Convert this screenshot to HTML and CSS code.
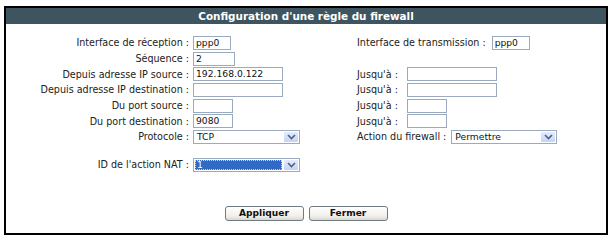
FILE: index.html
```html
<!DOCTYPE html>
<html>
<head>
<meta charset="utf-8">
<link rel="stylesheet" href="styles.css">
</head>
<body>
<div class="frame">
  <div class="title">Configuration d'une règle du firewall</div>
  <div class="grid">
    <div class="lbl">Interface de réception :</div>
    <div class="cell"><span class="inp w38">ppp0</span></div>
    <div class="cell rc">Interface de transmission :<span class="inp w38 ml6">ppp0</span></div>

    <div class="lbl">Séquence :</div>
    <div class="cell"><span class="inp w42">2</span></div>
    <div class="cell rc"></div>

    <div class="lbl">Depuis adresse IP source :</div>
    <div class="cell"><span class="inp w90">192.168.0.122</span></div>
    <div class="cell rc">Jusqu'à :<span class="inp w90 ml9">&nbsp;</span></div>

    <div class="lbl">Depuis adresse IP destination :</div>
    <div class="cell"><span class="inp w90">&nbsp;</span></div>
    <div class="cell rc">Jusqu'à :<span class="inp w90 ml9">&nbsp;</span></div>

    <div class="lbl">Du port source :</div>
    <div class="cell"><span class="inp w40">&nbsp;</span></div>
    <div class="cell rc">Jusqu'à :<span class="inp w40 ml9">&nbsp;</span></div>

    <div class="lbl">Du port destination :</div>
    <div class="cell"><span class="inp w40">9080</span></div>
    <div class="cell rc">Jusqu'à :<span class="inp w40 ml9">&nbsp;</span></div>

    <div class="lbl">Protocole :</div>
    <div class="cell"><span class="sel w107"><span class="val">TCP</span><span class="arr"><svg width="9" height="6" viewBox="0 0 9 6"><path d="M1 1 L4.5 4.5 L8 1" fill="none" stroke="#4d6185" stroke-width="1.6"/></svg></span></span></div>
    <div class="cell rc">Action du firewall :<span class="sel w106 ml5"><span class="val">Permettre</span><span class="arr"><svg width="9" height="6" viewBox="0 0 9 6"><path d="M1 1 L4.5 4.5 L8 1" fill="none" stroke="#4d6185" stroke-width="1.6"/></svg></span></span></div>

    <div class="spacer"></div>

    <div class="lbl">ID de l'action NAT :</div>
    <div class="cell"><span class="sel w107"><span class="val hi"><span class="focus">1</span></span><span class="arr"><svg width="9" height="6" viewBox="0 0 9 6"><path d="M1 1 L4.5 4.5 L8 1" fill="none" stroke="#4d6185" stroke-width="1.6"/></svg></span></span></div>
    <div class="cell rc"></div>
  </div>
  <div class="buttons">
    <button class="btn">Appliquer</button>
    <button class="btn">Fermer</button>
  </div>
</div>
</body>
</html>
```

FILE: styles.css
```css
html, body {
  margin: 0;
  padding: 0;
  background: #ffffff;
}
body {
  padding: 6px 0 0 4px;
  font-family: "DejaVu Sans", Verdana, sans-serif;
  color: #222;
}
.frame {
  width: 600px;
  height: 225px;
  border: 2px solid #000;
  background: #fff;
}
.title {
  height: 16px;
  line-height: 16px;
  background: #3e5560;
  color: #fff;
  font-weight: bold;
  font-size: 10.4px;
  text-align: center;
}
.grid {
  display: grid;
  grid-template-columns: 187px 164px auto;
  grid-template-rows: repeat(7, 15.7px) 12px 15.7px;
  padding-top: 11px;
  font-size: 9.6px;
}
.spacer {
  grid-column: 1 / -1;
}
.lbl {
  text-align: right;
  padding-right: 4px;
  display: flex;
  align-items: center;
  justify-content: flex-end;
  white-space: nowrap;
}
.cell {
  display: flex;
  align-items: center;
  white-space: nowrap;
}
.inp, .sel {
  box-sizing: border-box;
  height: 14px;
  border: 1px solid #9aabbf;
  background: #fff;
  font-size: 9.2px;
  line-height: 12px;
  padding: 0 2px;
  display: inline-block;
  color: #111;
}
.ml5 { margin-left: 5px; }
.ml6 { margin-left: 6px; }
.ml9 { margin-left: 9px; }
.w38 { width: 38px; }
.w40 { width: 40px; }
.w42 { width: 42px; }
.w90 { width: 90px; }
.w106 { width: 106px; }
.w107 { width: 107px; }
.sel {
  display: inline-flex;
  padding: 1px;
  align-items: stretch;
}
.val {
  flex: 1;
  padding-left: 2px;
  line-height: 10px;
}
.val.hi {
  background: #316ac5;
  color: #fff;
  margin-right: 2px;
  padding: 0;
  display: flex;
}
.focus {
  flex: 1;
  border: 1px dotted #f3d090;
  line-height: 8px;
  padding-left: 1px;
}
.arr {
  width: 14px;
  background: linear-gradient(#e4ecfb, #c3d4f7);
  border-radius: 1px;
  display: flex;
  align-items: center;
  justify-content: center;
}
.buttons {
  display: flex;
  justify-content: center;
  gap: 5px;
  margin-top: 33px;
}
.btn {
  width: 79px;
  height: 15px;
  padding: 0;
  border: 1px solid #6f7a84;
  border-radius: 3px;
  background: linear-gradient(#ffffff, #f0efea 70%, #d9d7cc);
  font-family: "DejaVu Sans", Verdana, sans-serif;
  font-weight: bold;
  font-size: 9.1px;
  color: #111;
  line-height: 13px;
}
```
